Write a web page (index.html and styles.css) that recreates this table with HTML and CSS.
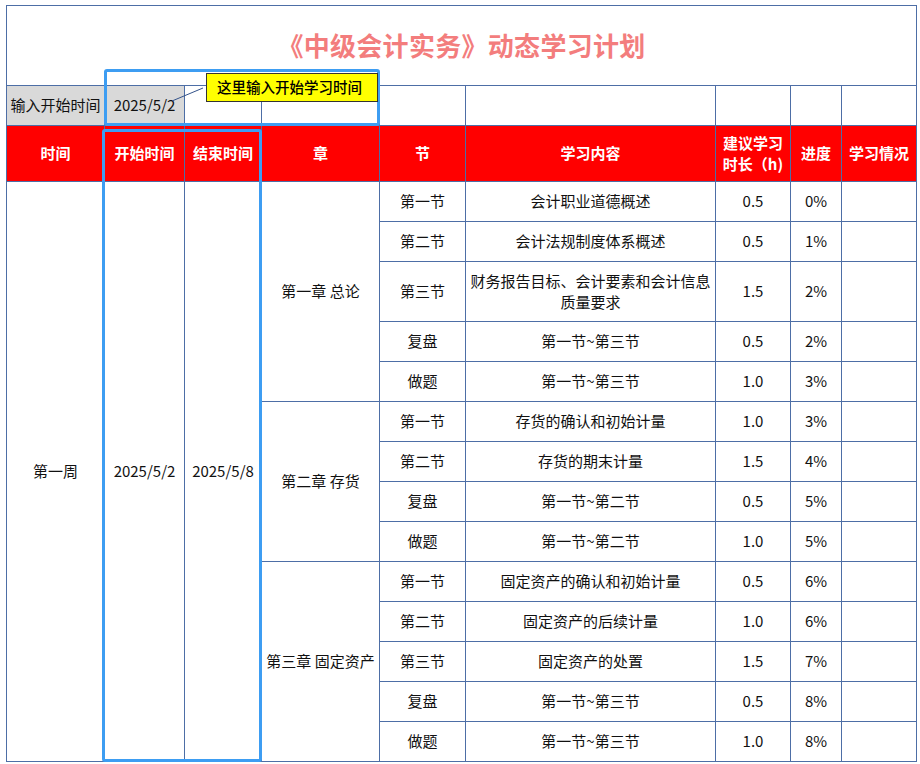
FILE: index.html
```html
<!DOCTYPE html>
<html lang="zh-CN">
<head>
<meta charset="utf-8">
<title>《中级会计实务》动态学习计划</title>
<link rel="stylesheet" href="styles.css">
</head>
<body>
<div class="sheet">
  <table class="plan">
    <colgroup>
      <col class="c1"><col class="c2"><col class="c3"><col class="c4"><col class="c5"><col class="c6"><col class="c7"><col class="c8"><col class="c9">
    </colgroup>
    <tr class="title-row"><td colspan="9" class="title">《中级会计实务》动态学习计划</td></tr>
    <tr class="input-row">
      <td class="gray">输入开始时间</td>
      <td class="gray">2025/5/2</td>
      <td></td><td></td><td></td><td></td><td></td><td></td><td></td>
    </tr>
    <tr class="head-row">
      <th>时间</th><th>开始时间</th><th>结束时间</th><th>章</th><th>节</th><th>学习内容</th><th class="wrap">建议学习时长（h)</th><th>进度</th><th>学习情况</th>
    </tr>
    <tr>
      <td rowspan="14">第一周</td><td rowspan="14">2025/5/2</td><td rowspan="14">2025/5/8</td>
      <td rowspan="5">第一章 总论</td><td>第一节</td><td>会计职业道德概述</td><td>0.5</td><td>0%</td><td></td>
    </tr>
    <tr><td>第二节</td><td>会计法规制度体系概述</td><td>0.5</td><td>1%</td><td></td></tr>
    <tr class="tall"><td>第三节</td><td>财务报告目标、会计要素和会计信息质量要求</td><td>1.5</td><td>2%</td><td></td></tr>
    <tr><td>复盘</td><td>第一节~第三节</td><td>0.5</td><td>2%</td><td></td></tr>
    <tr><td>做题</td><td>第一节~第三节</td><td>1.0</td><td>3%</td><td></td></tr>
    <tr><td rowspan="4">第二章 存货</td><td>第一节</td><td>存货的确认和初始计量</td><td>1.0</td><td>3%</td><td></td></tr>
    <tr><td>第二节</td><td>存货的期末计量</td><td>1.5</td><td>4%</td><td></td></tr>
    <tr><td>复盘</td><td>第一节~第二节</td><td>0.5</td><td>5%</td><td></td></tr>
    <tr><td>做题</td><td>第一节~第二节</td><td>1.0</td><td>5%</td><td></td></tr>
    <tr><td rowspan="5">第三章 固定资产</td><td>第一节</td><td>固定资产的确认和初始计量</td><td>0.5</td><td>6%</td><td></td></tr>
    <tr><td>第二节</td><td>固定资产的后续计量</td><td>1.0</td><td>6%</td><td></td></tr>
    <tr><td>第三节</td><td>固定资产的处置</td><td>1.5</td><td>7%</td><td></td></tr>
    <tr><td>复盘</td><td>第一节~第三节</td><td>0.5</td><td>8%</td><td></td></tr>
    <tr><td>做题</td><td>第一节~第三节</td><td>1.0</td><td>8%</td><td></td></tr>
  </table>

  <div class="hl hl-input"></div>
  <div class="hl hl-dates"></div>
  <svg class="leader" width="40" height="20" viewBox="0 0 40 20"><line x1="35" y1="2" x2="4" y2="15" stroke="#34538a" stroke-width="1"/></svg>
  <div class="callout">这里输入开始学习时间</div>
</div>
</body>
</html>
```

FILE: styles.css
```css
html, body {
  margin: 0;
  padding: 0;
  background: #ffffff;
}
body {
  font-family: "Noto Sans CJK SC", "Microsoft YaHei", sans-serif;
  font-size: 15px;
  color: #111;
}
.sheet {
  position: relative;
  width: 920px;
  height: 764px;
  padding: 5px 0 0 6px;
  box-sizing: border-box;
}
.plan {
  border-collapse: collapse;
  table-layout: fixed;
  width: 911px;
}
.c1 { width: 98px; }
.c2 { width: 80px; }
.c3 { width: 77px; }
.c4 { width: 118px; }
.c5 { width: 86px; }
.c6 { width: 250px; }
.c7 { width: 75px; }
.c8 { width: 51px; }
.c9 { width: 75px; }
.plan td, .plan th {
  border: 1px solid #4d6ea6;
  padding: 0 3px 2px;
  text-align: center;
  vertical-align: middle;
  line-height: 21px;
  font-weight: 400;
  white-space: normal;
}
.plan tr { height: 40px; }
.plan .title-row { height: 80px; }
.plan .title {
  font-size: 26px;
  font-weight: 700;
  color: #f37d7d;
  letter-spacing: 0.3px;
}
.plan .gray {
  background: #d9d9d9;
  padding: 0 1px 2px;
}
.plan .head-row { height: 56px; }
.plan th {
  background: #ff0000;
  color: #ffffff;
  font-weight: 700;
}
.plan th.wrap { padding: 0 6px 2px; }
.plan .tall { height: 60px; }

.hl {
  position: absolute;
  border: 3px solid #3d9df2;
  border-radius: 3px;
  box-sizing: border-box;
  pointer-events: none;
}
.hl-input {
  left: 104px;
  top: 69px;
  width: 276px;
  height: 57px;
}
.hl-dates {
  left: 102px;
  top: 129px;
  width: 160px;
  height: 633px;
}
.leader {
  position: absolute;
  left: 168px;
  top: 86px;
}
.callout {
  position: absolute;
  left: 206px;
  top: 73px;
  width: 172px;
  height: 29px;
  box-sizing: border-box;
  background: #ffff00;
  border: 1px solid #333;
  padding-left: 10px;
  line-height: 25px;
  font-size: 14.5px;
  font-weight: 500;
  color: #000;
}
```
